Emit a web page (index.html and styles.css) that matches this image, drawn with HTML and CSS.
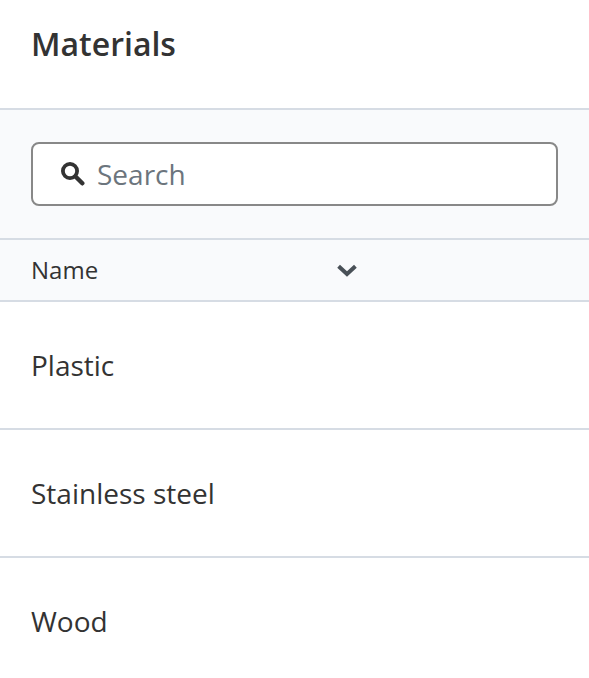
FILE: index.html
```html
<!DOCTYPE html>
<html lang="en">
<head>
  <meta charset="UTF-8" />
  <meta name="viewport" content="width=device-width, initial-scale=1.0"/>
  <title>Materials</title>
  <link rel="stylesheet" href="styles.css">
</head>
<body>
  <h1 class="title">Materials</h1>
  <div class="toolbar">
    <div class="search">
      <svg class="search-icon" width="24" height="24" viewBox="0 0 24 24">
        <circle cx="9" cy="9" r="7.1" fill="none" stroke="#333" stroke-width="3.8"/>
        <path d="M14.5 14.5 L21.3 21.3" stroke="#333" stroke-width="4.4" stroke-linecap="round"/>
      </svg>
      <span class="search-text">Search</span>
    </div>
  </div>
  <div class="table-head">
    <span class="col-name">Name</span>
    <svg class="chevron" width="22" height="14" viewBox="0 0 22 14">
      <path d="M2.6 3.2 L11 11 L19.4 3.2" fill="none" stroke="#495057" stroke-width="4"/>
    </svg>
  </div>
  <div class="row">Plastic</div>
  <div class="row">Stainless steel</div>
  <div class="row">Wood</div>
</body>
</html>
```

FILE: styles.css
```css
body {
  margin: 0;
  background: #fff;
  color: #333;
  font-family: "Open Sans", sans-serif;
  overflow: hidden;
}

.title {
  margin: 0;
  height: 108px;
  padding: 22px 31px 0;
  box-sizing: border-box;
  font-size: 32px;
  line-height: 44px;
  font-weight: 600;
}

.toolbar {
  background: #f9fafc;
  border-top: 2px solid #d6dce4;
  border-bottom: 2px solid #d6dce4;
  padding: 32px 31px;
}

.search {
  display: flex;
  align-items: center;
  height: 64px;
  box-sizing: border-box;
  background: #fff;
  border: 2px solid #888;
  border-radius: 8px;
  padding-left: 28px;
}

.search-icon {
  margin-right: 12px;
}

.search-text {
  font-size: 28px;
  color: #6c757d;
}

.table-head {
  display: flex;
  align-items: center;
  height: 60px;
  background: #f9fafc;
  border-bottom: 2px solid #d6dce4;
  padding-left: 31px;
}

.col-name {
  width: 305px;
  margin-bottom: 2px;
  font-size: 24px;
}

.row {
  display: flex;
  align-items: center;
  height: 126px;
  padding-left: 31px;
  border-bottom: 2px solid #d6dce4;
  font-size: 28px;
}

.row:last-child {
  border-bottom: none;
}
```
